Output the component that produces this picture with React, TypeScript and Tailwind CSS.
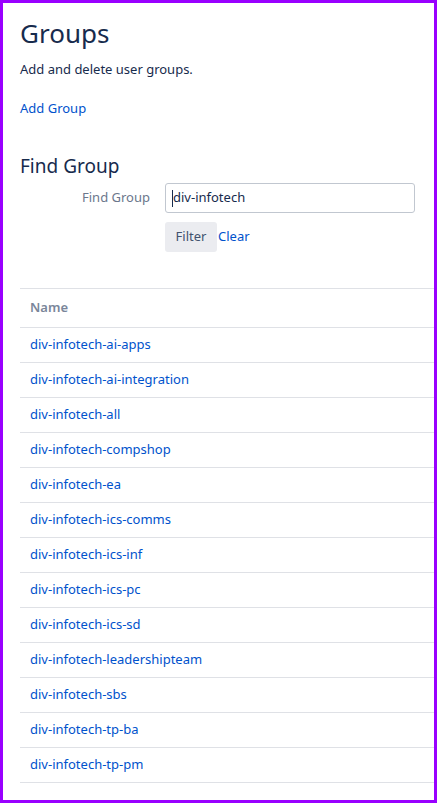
import React from "react";

const groups = [
  "div-infotech-ai-apps",
  "div-infotech-ai-integration",
  "div-infotech-all",
  "div-infotech-compshop",
  "div-infotech-ea",
  "div-infotech-ics-comms",
  "div-infotech-ics-inf",
  "div-infotech-ics-pc",
  "div-infotech-ics-sd",
  "div-infotech-leadershipteam",
  "div-infotech-sbs",
  "div-infotech-tp-ba",
  "div-infotech-tp-pm",
];

export default function App() {
  return (
    <div
      className="w-[437px] h-[803px] border-[3px] border-[#9900ff] bg-white text-[#172b4d] text-[14px] overflow-hidden"
      style={{ fontFamily: '"Noto Sans", "Open Sans", sans-serif' }}
    >
      <div className="pl-[17px] pt-[14px]">
        <h1 className="text-[26px] leading-[32px] text-[#172b4d]">Groups</h1>
        <p className="mt-[10px] text-[13px] leading-[20px]">Add and delete user groups.</p>
        <a className="block mt-[19px] text-[13px] leading-[20px] text-[#0052cc]">Add Group</a>

        <h2 className="mt-[35px] text-[19px] leading-[26px]">Find Group</h2>
        <div className="mt-[4px] flex items-center">
          <label className="w-[145px] pr-[15px] text-right text-[13px] text-[#6b778c]">Find Group</label>
          <div className="w-[250px] h-[30px] border border-[#c1c7d0] rounded-[3px] flex items-center px-[6px] text-[13px]">
            <span className="w-px h-[17px] bg-[#172b4d]" />
            <span>div-infotech</span>
          </div>
        </div>
        <div className="mt-[9px] ml-[145px] flex items-center">
          <button className="w-[52px] h-[30px] rounded-[3px] bg-[#ebecf0] text-[13px] text-[#42526e]">Filter</button>
          <a className="ml-[1px] text-[13px] text-[#0052cc]">Clear</a>
        </div>

        <table className="mt-[36px] w-full border-collapse">
          <thead>
            <tr className="border-t border-b border-[#dfe1e6]">
              <th className="h-[39px] pl-[10px] text-left text-[13px] font-semibold text-[#7a869a]">Name</th>
            </tr>
          </thead>
          <tbody>
            {groups.map((g) => (
              <tr key={g} className="border-b border-[#dfe1e6]">
                <td className="h-[35px] pl-[10px] text-[13px] text-[#0052cc]">{g}</td>
              </tr>
            ))}
          </tbody>
        </table>
      </div>
    </div>
  );
}
